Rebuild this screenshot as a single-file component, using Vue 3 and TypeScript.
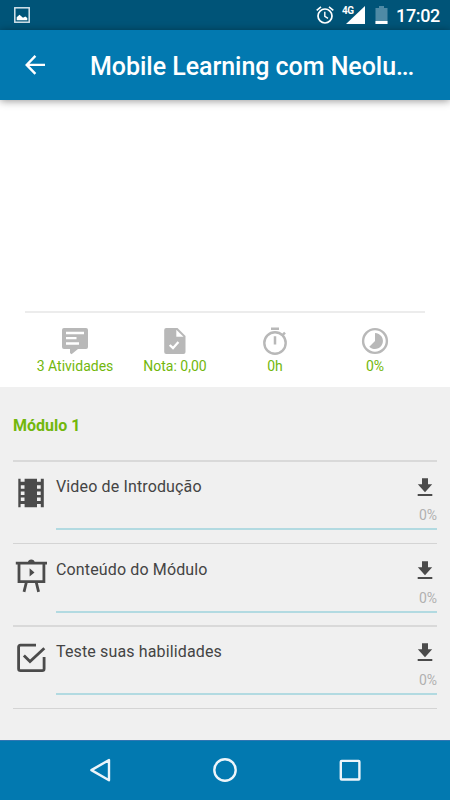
<script setup lang="ts">
interface Stat { icon: string; label: string }
interface Activity { icon: string; title: string; progress: number }

const stats: Stat[] = [
  { icon: 'chat', label: '3 Atividades' },
  { icon: 'grade', label: 'Nota: 0,00' },
  { icon: 'timer', label: '0h' },
  { icon: 'progress', label: '0%' },
]

const activities: Activity[] = [
  { icon: 'film', title: 'Video de Introdução', progress: 0 },
  { icon: 'board', title: 'Conteúdo do Módulo', progress: 0 },
  { icon: 'check', title: 'Teste suas habilidades', progress: 0 },
]
</script>

<template>
  <div class="screen">
    <div class="status-bar">
      <svg class="picture" width="16" height="16" viewBox="0 0 16 16">
        <rect x=".8" y=".8" width="14.4" height="14.4" fill="none" stroke="#d5e4ec" stroke-width="1.5" />
        <path d="M2.7 13.3V10.2L5.5 7.8L9 10.8L11.3 9.4L13.3 11V13.3Z" fill="#fff" />
      </svg>
      <svg class="alarm" width="18" height="18" viewBox="0 0 18 18" fill="none" stroke="#fff">
        <circle cx="9" cy="10" r="7" stroke-width="1.7" />
        <path d="M.7 4.3L5 .8M17.3 4.3L13 .8" stroke-width="1.6" />
        <path d="M8.8 5.7V10.4L12 12.4" stroke-width="1.4" />
      </svg>
      <div class="signal">
        <span class="network">4G</span>
        <svg width="19" height="18" viewBox="0 0 19 18"><path d="M19 0V18H0Z" fill="#fff" /></svg>
      </div>
      <svg class="battery" width="13" height="18" viewBox="0 0 13 18">
        <path d="M4 0H9V2H12.5V18H.5V2H4Z" fill="#4f8aa5" />
        <path d="M.5 15H12.5V18H.5Z" fill="#fff" />
      </svg>
      <span class="clock">17:02</span>
    </div>

    <header class="app-bar">
      <svg class="back" width="20" height="20" viewBox="0 0 20 20" fill="none" stroke="#fff" stroke-width="2.4">
        <path d="M10.4 .9L1.7 9.9L10.4 18.9M1.7 9.9H20" />
      </svg>
      <h1>Mobile Learning com Neolu<span class="dots">...</span></h1>
    </header>

    <section class="summary">
      <div class="stats">
        <div v-for="stat in stats" :key="stat.icon" class="stat">
          <svg v-if="stat.icon === 'chat'" width="28" height="28" viewBox="0 0 28 28">
            <path d="M3 1H25Q27 1 27 3V20Q27 22 25 22H17L10.5 27.2L9 26V22H3Q1 22 1 20V3Q1 1 3 1Z" fill="#b8b8b8" />
            <path d="M5 6H23M5 11.2H15.5M5 16.5H18" stroke="#fff" stroke-width="2.3" />
          </svg>
          <svg v-else-if="stat.icon === 'grade'" width="28" height="28" viewBox="0 0 28 28">
            <path d="M5.2 1H16.5L24.5 9V25Q24.5 27 22.5 27H5.2Q3.2 27 3.2 25V3Q3.2 1 5.2 1Z" fill="#b8b8b8" />
            <path d="M15.3 2.8V9.7H22.5Z" fill="#fff" />
            <path d="M8.7 18L12 21.2L17.4 15" fill="none" stroke="#fff" stroke-width="2.3" />
          </svg>
          <svg v-else-if="stat.icon === 'timer'" width="28" height="28" viewBox="0 0 28 28" fill="none" stroke="#b8b8b8">
            <circle cx="14" cy="16" r="10.7" stroke-width="2.4" />
            <path d="M10 1.7H18M14 9.2V17.5M20.8 8.8L24 5.6" stroke-width="2.5" />
          </svg>
          <svg v-else width="28" height="28" viewBox="0 0 28 28">
            <circle cx="14" cy="14" r="11.9" fill="none" stroke="#b8b8b8" stroke-width="2.4" />
            <path d="M14 14V6A8 8 0 1 1 8.3 19.7Z" fill="#b8b8b8" />
          </svg>
          <span>{{ stat.label }}</span>
        </div>
      </div>
    </section>

    <main class="module">
      <h2>Módulo 1</h2>
      <ul>
        <li v-for="activity in activities" :key="activity.icon" class="activity">
          <svg v-if="activity.icon === 'film'" class="kind" width="32" height="36" viewBox="0 0 32 36">
            <path d="M3.3 2.7H5.6V5.7H9.6V2.7H22V5.7H25.8V2.7H28.8V31.2H25.8V28H22V31.2H9.6V28H5.6V31.2H3.3Z" fill="#4b4b4b" />
            <path d="M5.8 9.2h3.7v3.5h-3.7zM5.8 15.4h3.7v3.5h-3.7zM5.8 21.6h3.7v3.5h-3.7zM22 9.2h3.7v3.5h-3.7zM22 15.4h3.7v3.5h-3.7zM22 21.6h3.7v3.5h-3.7z" fill="#f0f0f0" />
          </svg>
          <svg v-else-if="activity.icon === 'board'" class="kind" width="32" height="36" viewBox="0 0 32 36">
            <path d="M.8 4.2H32M4 4.4V22.6H28.9V4.4M11.3 23.5L9 32.9M21.3 23.5L23.6 32.9" fill="none" stroke="#4b4b4b" stroke-width="2.8" />
            <path d="M12.8 3.5Q13.3 .4 16.3 .4T19.8 3.5ZM14.6 9.2L19.5 13.4L14.6 17.6Z" fill="#4b4b4b" />
          </svg>
          <svg v-else class="kind" width="32" height="36" viewBox="0 0 32 36" fill="none" stroke="#4b4b4b" stroke-width="2.8">
            <path d="M21 4.2H5.5Q3.6 4.2 3.6 6.1V27.7Q3.6 29.6 5.5 29.6H27.2Q29.1 29.6 29.1 27.7V16" />
            <path d="M8.9 14.5L15 20.6L29.3 7.3" />
          </svg>
          <div class="detail">
            <div class="line">
              <span class="title">{{ activity.title }}</span>
              <svg class="download" width="16" height="19" viewBox="0 0 16 19" fill="#4b4b4b">
                <path d="M5 .3H11V6.3H15.2L8 14.3L.8 6.3H5ZM.7 16H15.3V18H.7Z" />
              </svg>
            </div>
            <span class="percent">{{ activity.progress }}%</span>
            <div class="track"><div class="bar" :style="{ width: activity.progress + '%' }" /></div>
          </div>
        </li>
      </ul>
    </main>

    <nav class="system-nav">
      <svg width="26" height="26" viewBox="0 0 26 26"><path d="M22 2V22.2L4.4 12.1Z" /></svg>
      <svg width="26" height="26" viewBox="0 0 26 26"><circle cx="13" cy="12" r="10.7" /></svg>
      <svg width="26" height="26" viewBox="0 0 26 26"><rect x="3.8" y="2.9" width="18.6" height="18.6" rx=".8" /></svg>
    </nav>
  </div>
</template>

<style>
body { margin: 0; }
</style>

<style scoped>
.screen {
  width: 450px;
  height: 800px;
  display: flex;
  flex-direction: column;
  overflow: hidden;
  background: #f0f0f0;
  font-family: Roboto, sans-serif;
}
.status-bar {
  height: 30px;
  flex: none;
  box-sizing: border-box;
  display: flex;
  align-items: flex-start;
  padding: 6px 10px 0 14px;
  background: #005478;
  color: #fff;
}
.picture { margin-top: 1px; }
.alarm { margin-left: auto; }
.signal { display: flex; margin-left: 8px; }
.network { font-size: 10px; line-height: 10px; font-weight: 700; width: 11px; margin-right: -7px; letter-spacing: -.5px; white-space: nowrap; }
.battery { margin-left: 10px; }
.clock { margin-left: 8px; font-size: 18px; line-height: 19px; font-weight: 500; letter-spacing: -.35px; width: 44px; white-space: nowrap; }
.app-bar {
  position: relative;
  height: 70px;
  flex: none;
  display: flex;
  align-items: center;
  background: #0279b0;
  box-shadow: 0 1px 8px rgba(0, 0, 0, .42);
}
.back { margin-left: 25px; }
h1 { margin: 3px 0 0 45px; color: #fff; font-size: 25px; line-height: 32px; font-weight: 500; letter-spacing: -.04px; white-space: nowrap; }
.dots { letter-spacing: -1.2px; }
.summary {
  height: 287px;
  flex: none;
  box-sizing: border-box;
  display: flex;
  flex-direction: column;
  justify-content: flex-end;
  padding: 0 25px;
  background: #fff;
}
.stats { display: flex; height: 76px; box-sizing: border-box; border-top: 2px solid #ececec; padding-top: 14px; }
.stat { flex: 1; display: flex; flex-direction: column; align-items: center; color: #72b70c; font-size: 14px; line-height: 18px; white-space: nowrap; }
.stat span { margin-top: 2px; }
.module { flex: 1; padding: 0 13px; }
h2 { margin: 0; padding-top: 28px; height: 45px; font-size: 16px; line-height: 21px; font-weight: 700; color: #72b70c; }
ul { margin: 0; padding: 0; list-style: none; border-bottom: 1px solid #d4d4d4; }
.activity { display: flex; height: 83px; box-sizing: border-box; border-top: 2px solid #d9d9d9; padding-top: 14px; }
.activity:nth-child(2) { height: 82px; border-top: 1px solid #d4d4d4; padding-top: 15px; }
.kind { flex: none; margin-left: 2px; }
.detail { flex: 1; margin-left: 9px; display: flex; flex-direction: column; }
.line { display: flex; justify-content: space-between; height: 29px; }
.title { padding-top: 1px; font-size: 16px; line-height: 20px; letter-spacing: .14px; color: #444; white-space: nowrap; }
.download { margin: 2px 4px 0 0; }
.percent { align-self: flex-end; font-size: 14px; line-height: 20px; color: #b0b0b0; }
.track { height: 2px; margin-top: 3px; background: #b2dae1; }
.bar { height: 100%; background: #0279b0; }
.system-nav {
  height: 60px;
  flex: none;
  box-sizing: border-box;
  display: flex;
  justify-content: space-between;
  padding: 17px 87px 0;
  border-top: 1px solid #3176b3;
  background: #0279b0;
}
.system-nav svg { fill: none; stroke: #edf5fa; stroke-width: 2.4; stroke-linejoin: round; }
</style>
